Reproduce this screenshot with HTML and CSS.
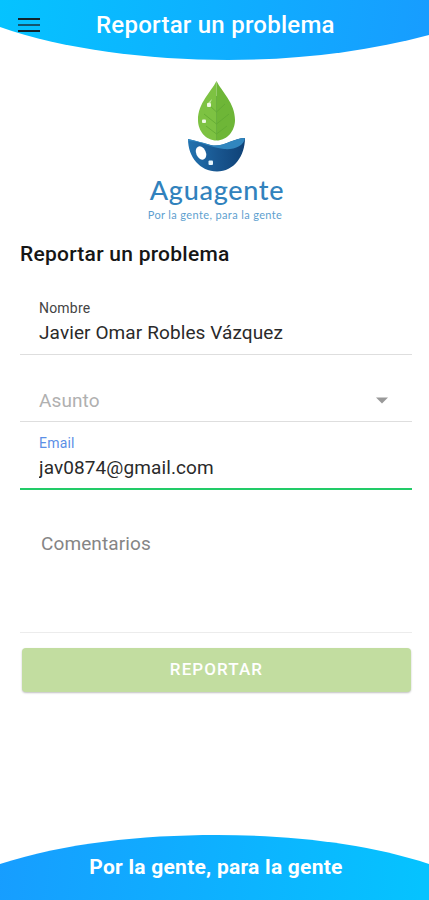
FILE: index.html
```
<!DOCTYPE html>
<html lang="es">
<head>
    <meta charset="UTF-8">
    <meta name="viewport" content="width=device-width, initial-scale=1.0">
    <title>Reportar un problema</title>
    <link rel="stylesheet" href="styles.css">
</head>
<body>
    <!-- Encabezado -->
    <header class="header">
        <svg class="curve" viewBox="0 0 429 60" preserveAspectRatio="none">
            <defs>
                <linearGradient id="headerFill" x1="0" y1="0" x2="1" y2="0.02">
                    <stop offset="0" stop-color="#05c3ff"/>
                    <stop offset="1" stop-color="#179dff"/>
                </linearGradient>
            </defs>
            <path d="M0 0H429V35C366 52 296 60 228 60C148 60 62 49 0 27Z" fill="url(#headerFill)"/>
        </svg>
        <button class="menu" type="button" aria-label="Menú">
            <span></span>
            <span></span>
            <span></span>
        </button>
        <h1>Reportar un problema</h1>
    </header>

    <main>
        <!-- Logo -->
        <div class="logo">
            <svg class="logo-icon" width="60" height="94" viewBox="0 0 60 94">
                <defs>
                    <linearGradient id="bowl" x1="0" y1="0" x2="1" y2="0">
                        <stop offset="0" stop-color="#2273b0"/>
                        <stop offset="0.5" stop-color="#195791"/>
                        <stop offset="1" stop-color="#0f4176"/>
                    </linearGradient>
                </defs>
                <path d="M30.5 1C25 12 12 23 12 40C12 51 20 60.500 30.500 60.500Z" fill="#7dc242"/>
                <path d="M30.500 1C36 12 49 23 49 40C49 51 41 60.500 30.500 60.500Z" fill="#6eb637"/>
                <path d="M30.500 16V60M30.500 32L22 24M30.500 32L39 24M30.500 44L18 34M30.500 44L43 34M30.500 54L20 46M30.500 54L41 46" stroke="#5fa832" stroke-width="0.8" fill="none"/>
                <path d="M21 24L26 19L24 24Z" fill="#c5e7a2"/>
                <rect x="21" y="23" width="4" height="4" rx="1" fill="#eff9e5"/>
                <rect x="16" y="39.500" width="4" height="3.500" rx="1" fill="#eff9e5"/>
                <path d="M2 59C10 61 17 63 25 65C37 68 47 58 59 58C59 76 48 91.500 31 91.500C14 91.500 2 77 2 59Z" fill="url(#bowl)"/>
                <path d="M2 59C10 61 16 62 24 65C36 68 47 58 59 58C58 66 48 70 38 69C25 68 15 61 2 61Z" fill="#3186bf"/>
                <ellipse cx="15" cy="73" rx="4.800" ry="7" transform="rotate(-25 15 73)" fill="#fff"/>
                <rect x="22.500" y="80.500" width="4.500" height="4.500" rx="1" fill="#e6f5fc"/>
            </svg>
            <div class="logo-name">Aguagente</div>
            <div class="logo-slogan">Por la gente, para la gente</div>
        </div>

        <h2>Reportar un problema</h2>

        <form class="report-form">
            <div class="field field-name">
                <label for="name">Nombre</label>
                <input type="text" id="name" value="Javier Omar Robles Vázquez">
            </div>
            <div class="field field-subject">
                <span>Asunto</span>
                <svg width="12" height="7" viewBox="0 0 12 7"><path d="M0 0.500H12L6 6.500Z" fill="#999"/></svg>
            </div>
            <div class="field field-email">
                <label for="email">Email</label>
                <input type="email" id="email" value="jav0874@gmail.com">
            </div>
            <div class="field field-comments">
                <textarea id="comments" placeholder="Comentarios"></textarea>
            </div>
            <button class="submit" type="submit" disabled>REPORTAR</button>
        </form>
    </main>

    <!-- Pie de página -->
    <footer class="footer">
        <svg class="curve" viewBox="0 0 429 65" preserveAspectRatio="none">
            <defs>
                <linearGradient id="footerFill" x1="0" y1="0" x2="1" y2="0.02">
                    <stop offset="0" stop-color="#179dff"/>
                    <stop offset="1" stop-color="#05c3ff"/>
                </linearGradient>
            </defs>
            <path d="M0 65V29C66 8 140 0 217 0C288 0 366 8 429 29V65Z" fill="url(#footerFill)"/>
        </svg>
        <p>Por la gente, para la gente</p>
    </footer>
</body>
</html>
```
FILE: styles.css
```
* {
    box-sizing: border-box;
}
body {
    margin: 0;
    height: 900px;
    display: flex;
    flex-direction: column;
    font-family: Roboto, sans-serif;
    background-color: #fff;
    color: #222;
    overflow: hidden;
}
h1, h2, p {
    margin: 0;
}
.header {
    position: relative;
    height: 60px;
    flex-shrink: 0;
    display: flex;
    align-items: flex-start;
}
/* Fondo curvo detrás del texto */
.curve {
    position: absolute;
    top: 0;
    left: 0;
    width: 100%;
    height: 100%;
    z-index: -1;
}
.menu {
    display: flex;
    flex-direction: column;
    gap: 4px;
    width: 22px;
    margin: 18px 0 0 18px;
    padding: 0;
    border: none;
    background: none;
}
.menu span {
    width: 22px;
    height: 2px;
    background-color: #10242c;
}
.menu span:nth-child(2) {
    background-color: #155570;
}
.header h1 {
    margin-left: 56px;
    padding-top: 10px;
    font-size: 24px;
    line-height: 30px;
    font-weight: 500;
    letter-spacing: 0.25px;
    color: #fff;
    white-space: nowrap;
}
main {
    flex: 1;
    padding: 20px 17px 0 20px;
}
.logo {
    display: flex;
    flex-direction: column;
    align-items: center;
    height: 159px;
}
.logo-icon {
    flex-shrink: 0;
}
.logo-name {
    margin-left: 2px;
    font-family: Lato, sans-serif;
    font-size: 27px;
    line-height: 32px;
    font-weight: 500;
    letter-spacing: 0.7px;
    color: #3182bd;
    white-space: nowrap;
}
.logo-slogan {
    margin-right: 2px;
    font-family: Lato, sans-serif;
    font-size: 11px;
    line-height: 18px;
    letter-spacing: 0.37px;
    color: #5e9fcf;
    white-space: nowrap;
}
h2 {
    font-size: 21px;
    line-height: 30px;
    font-weight: 500;
    letter-spacing: 0.25px;
    color: #161616;
}
.field {
    display: flex;
    flex-direction: column;
    padding: 0 19px;
    border-bottom: 1px solid #dedede;
}
.field label {
    font-size: 14px;
    line-height: 18px;
    letter-spacing: 0.2px;
    color: #444;
}
.field input {
    height: 30px;
    padding: 0;
    border: none;
    outline: none;
    background: none;
    font-family: inherit;
    font-size: 19px;
    letter-spacing: 0.1px;
    color: #2a2a2a;
}
.field-name {
    height: 86px;
    padding-top: 30px;
}
.field-subject {
    height: 67px;
    flex-direction: row;
    justify-content: space-between;
    align-items: center;
    padding: 24px 24px 0 19px;
    font-size: 19px;
    letter-spacing: 0.1px;
    color: #b0b0b0;
}
.field-email {
    height: 68px;
    padding-top: 12px;
    border-bottom: 2px solid #22cb68;
}
.field-email label {
    color: #5c8fe6;
}
.field-comments {
    height: 143px;
    padding: 42px 21px 0;
    border-color: #ececec;
}
.field textarea {
    height: 90px;
    padding: 0;
    border: none;
    outline: none;
    resize: none;
    background: none;
    font-family: inherit;
    font-size: 19px;
    line-height: 24px;
    letter-spacing: 0.1px;
}
.field textarea::placeholder {
    color: #858585;
}
.submit {
    display: block;
    width: 389px;
    height: 44px;
    margin: 15px 0 0 2px;
    padding: 0 0 2px;
    border: none;
    border-radius: 4px;
    background-color: #c2dda0;
    box-shadow: 0 1px 2px rgba(0, 0, 0, 0.25);
    font-family: inherit;
    font-size: 17px;
    font-weight: 500;
    letter-spacing: 1.1px;
    color: #fff;
}
.footer {
    position: relative;
    height: 65px;
    flex-shrink: 0;
    padding: 17px 0 0 3px;
    text-align: center;
}
.footer p {
    font-size: 21px;
    line-height: 30px;
    font-weight: 700;
    letter-spacing: 0.25px;
    color: #fff;
    white-space: nowrap;
}
```
